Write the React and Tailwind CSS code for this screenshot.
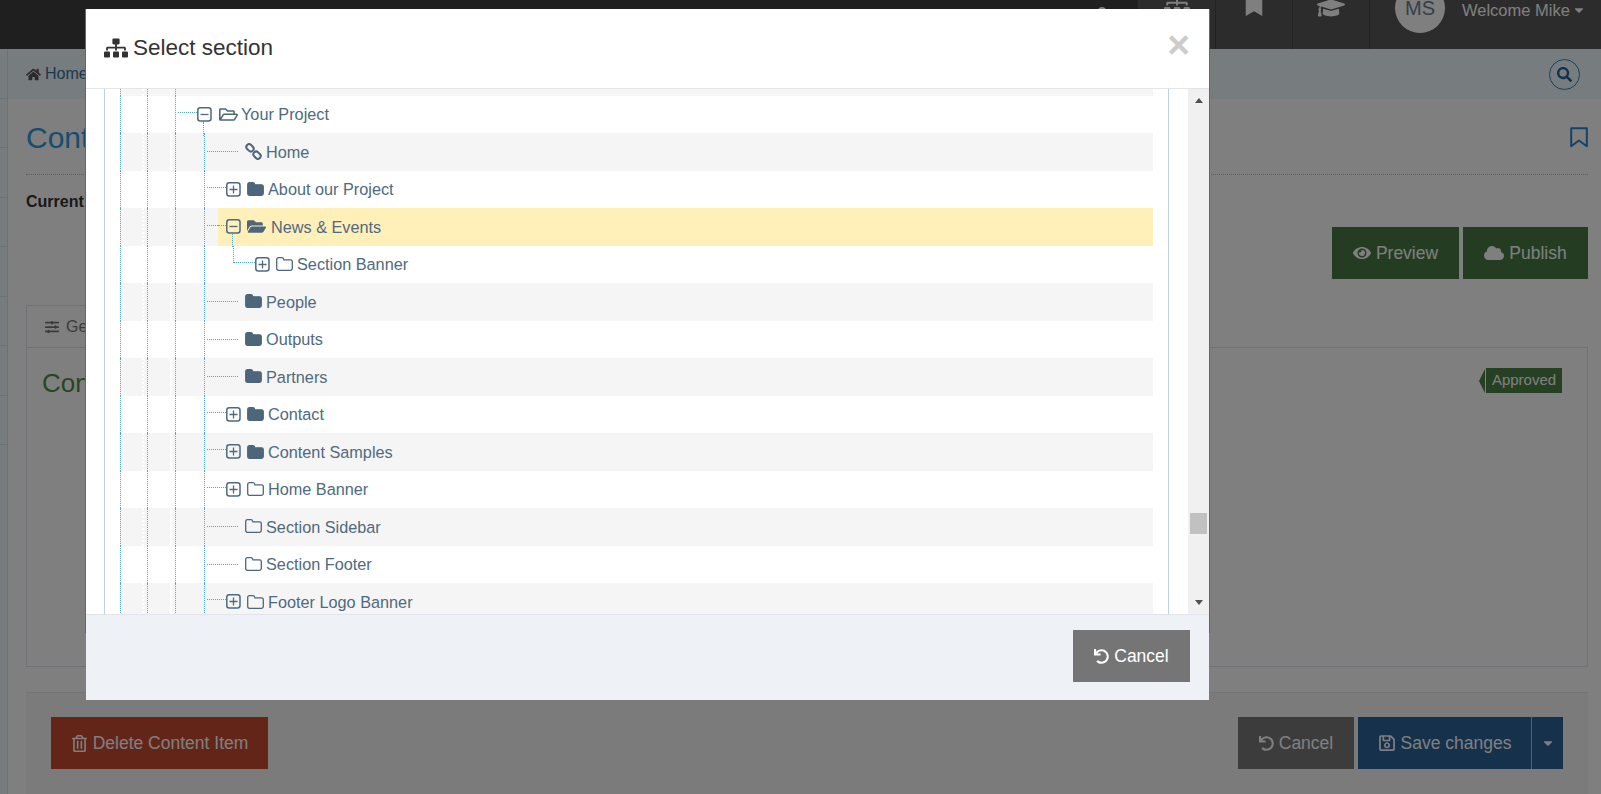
import React from "react";
import {
  FaSitemap, FaHome, FaFolderOpen, FaRegFolderOpen,
  FaEye, FaCloud, FaUndo, FaRegTrashAlt, FaRegSave, FaSlidersH, FaSearch, FaBookmark,
  FaGraduationCap, FaCaretDown, FaUser,
} from "react-icons/fa";

const Box = ({ minus, tail }) => (
  <span className="relative block h-[15px] w-[15px] shrink-0">
    <svg width="15" height="15" viewBox="0 0 15 15" className="block">
      <rect x="0.8" y="0.8" width="13.2" height="13.2" rx="2.5" fill="none" stroke="#4f6a80" strokeWidth="1.5" />
      <path d={minus ? "M3.5 7.5H11.5" : "M3.5 7.5H11.5M7.5 3.5V11.5"} stroke="#4f6a80" strokeWidth="1.3" fill="none" />
    </svg>
    {tail ? <span className={`absolute left-[6px] top-full block border-l border-dotted border-[#4da6df] ${tail}`} /> : null}
  </span>
);

const folderPath =
  "M2.5 .7H6Q7.3 .7 7.6 2L7.9 2.8H14.5Q16.3 2.8 16.3 4.5V11.5Q16.3 13.3 14.5 13.3H2.5Q.7 13.3 .7 11.5V2.5Q.7 .7 2.5 .7Z";

const Icon = ({ kind }) => {
  const c = "block shrink-0 text-[#4d667b]";
  if (kind === "link")
    return (
      <svg width="17" height="17" viewBox="0 0 17 17" className={c} fill="none" stroke="currentColor" strokeWidth="2">
        <rect x="1" y="2" width="8" height="5.6" rx="2.8" transform="rotate(45 5 4.8)" />
        <rect x="8" y="9.4" width="8" height="5.6" rx="2.8" transform="rotate(45 12 12.2)" />
      </svg>
    );
  if (kind === "solid")
    return (
      <svg width="17" height="14" viewBox="0 0 17 14" className={c}>
        <path d={folderPath} fill="currentColor" stroke="currentColor" strokeWidth="1.2" />
      </svg>
    );
  if (kind === "outline")
    return (
      <svg width="17" height="14" viewBox="0 0 17 14" className={c}>
        <path d={folderPath} fill="none" stroke="currentColor" strokeWidth="1.3" />
      </svg>
    );
  if (kind === "open") return <FaRegFolderOpen size={19} className={c} />;
  return <FaFolderOpen size={19} className={c} />;
};

const Guides = ({ stripe, last }) => {
  const bg = stripe ? "bg-[#f5f5f5]" : "bg-white";
  return (
    <>
      <div className={`w-[24px] shrink-0 border-l border-r-2 border-dotted border-l-[#4da6df] border-r-white border-r-solid ${bg}`} />
      <div className={`w-[28px] shrink-0 border-r-2 border-white ${bg}`}>
        <div className="ml-[3px] h-full border-l border-dotted border-[#4da6df]" />
      </div>
      {last ? null : (
        <div className={`w-[32px] shrink-0 ${bg}`}>
          <div className="ml-[3px] h-full border-l border-dotted border-[#4da6df]" />
        </div>
      )}
    </>
  );
};

const Label = ({ children, className = "" }) => (
  <span className={`whitespace-nowrap text-[16.25px] text-[#4f6a80] ${className}`}>{children}</span>
);

const Dots = ({ w, mt, ml = "" }) => <span className={`${w} ${mt} ${ml} block shrink-0 self-start border-t border-dotted border-[#4da6df]`} />;

const Child = ({ stripe, label, icon, exp }) => (
  <div className="flex h-[37.5px]">
    <Guides stripe={stripe} />
    <div className={`flex flex-1 items-center border-l border-dotted border-[#4da6df] ${stripe ? "bg-[#f5f5f5]" : "bg-white"}`}>
      {exp ? (
        <>
          <Dots w="w-[19px]" mt="mt-[16px]" ml="ml-[2px]" />
          <Box />
          <span className="ml-[6px]"><Icon kind={icon} /></span>
          <Label className="ml-[4px]">{label}</Label>
        </>
      ) : (
        <>
          <Dots w="w-[31px]" mt="mt-[18px]" ml="ml-[2px]" />
          <span className="ml-[7px] pb-[1px]"><Icon kind={icon} /></span>
          <Label className="ml-[4px]">{label}</Label>
        </>
      )}
    </div>
  </div>
);

const PageBtn = ({ className, children }) => (
  <button className={`flex h-[52px] items-center justify-center gap-[5px] text-[17.5px] text-white ${className}`}>{children}</button>
);

export default function App() {
  return (
    <div className="relative h-[794px] w-[1601px] overflow-hidden bg-white font-['Liberation_Sans',Arial,sans-serif]">
      {/* top bar */}
      <header className="flex h-[49px] items-start justify-end overflow-hidden bg-[#3f3f3f]">
        <div className="flex h-full w-[70px] justify-center"><FaUser size={18} className="mt-[7px] text-white" /></div>
        <div className="flex h-full items-start bg-[#585858]">
          <div className="flex h-full w-[78px] justify-center border-l border-[#444]"><FaSitemap size={26} className="-mt-[10px] text-white" /></div>
          <div className="flex h-full w-[77px] justify-center border-l border-[#444]"><FaBookmark size={22} className="-mt-[6px] text-white" /></div>
          <div className="flex h-full w-[77px] justify-center border-l border-[#444]"><FaGraduationCap size={28} className="-mt-[6px] text-white" /></div>
          <div className="flex h-full w-[232px] items-start border-l border-[#444] pl-[25px]">
            <div className="-mt-[17px] flex h-[50px] w-[50px] items-center justify-center rounded-full bg-white text-[20px] text-[#6a7f90]">MS</div>
            <span className="ml-[17px] mt-[1px] text-[16.5px] leading-[18px] text-white">Welcome Mike</span>
            <FaCaretDown size={14} className="ml-[2px] mt-[3px] text-white" />
          </div>
        </div>
      </header>

      <div className="flex h-[745px]">
        {/* slim sidebar */}
        <aside className="w-[8px] shrink-0 border-r border-[#d9e4ec] bg-[#eef8fe]">
          {[0, 1, 2, 3, 4, 5, 6, 7].map((i) => (
            <div key={i} className="h-[49.5px] border-b border-[#d4e2ee]" />
          ))}
        </aside>

        <main className="flex min-w-0 flex-1 flex-col">
          <nav className="flex h-[50px] shrink-0 items-center justify-between bg-[#eef8fe] pl-[18px] pr-[21px]">
            <div className="flex items-center gap-[4px] text-[16px] text-[#36709f]">
              <FaHome size={15} className="text-[#555]" />
              <span>Home</span>
            </div>
            <div className="flex h-[31px] w-[31px] items-center justify-center rounded-full border border-[#2a85c8]">
              <FaSearch size={15} className="text-[#20649e]" />
            </div>
          </nav>

          <div className="flex min-h-0 flex-1 flex-col pl-[18px] pr-[13px]">
            <div className="flex h-[76px] shrink-0 items-center justify-between border-b border-dotted border-[#bbb] pt-[1px]">
              <h1 className="text-[30px] text-[#2d9ae0]">Content</h1>
              <svg width="18" height="21" viewBox="0 0 18 21" fill="none" stroke="#2a85c8" strokeWidth="2">
                <path d="M1.2 1.2H16.8V19.3L9 13.5L1.2 19.3Z" strokeLinejoin="round" />
              </svg>
            </div>
            <p className="h-[52px] shrink-0 pt-[17px] text-[16px] font-bold leading-[20px] text-[#333]">Current</p>
            <div className="flex shrink-0 justify-end gap-[4px]">
              <PageBtn className="w-[127px] bg-[#487a44]"><FaEye size={18} /> Preview</PageBtn>
              <PageBtn className="w-[125px] bg-[#487a44]"><FaCloud size={20} /> Publish</PageBtn>
            </div>
            <div className="mt-[26px] flex h-[42px] w-[110px] shrink-0 items-center gap-[7px] border border-b-0 border-[#dce4ee] pl-[18px] text-[16px] text-[#777]">
              <FaSlidersH size={14} />
              <span>General</span>
            </div>
            <section className="flex h-[320px] shrink-0 items-start justify-between border border-[#dce4ee] pl-[15px] pr-[25px] pt-[20px]">
              <h2 className="text-[26px] leading-[30px] text-[#4e8f49]">Content</h2>
              <div className="flex items-center">
                <span className="mr-px h-0 w-0 border-y-[12px] border-r-[6px] border-y-transparent border-r-[#4a8046]" />
                <span className="flex h-[25px] w-[76px] items-center justify-center bg-[#4a8046] text-[15px] text-white">Approved</span>
              </div>
            </section>
            <footer className="mt-[25px] flex flex-1 items-start justify-between border-t border-[#e8e8e8] bg-[#f6f6f6] px-[25px] pt-[24px]">
              <PageBtn className="w-[217px] bg-[#c64a30]"><FaRegTrashAlt size={17} /> Delete Content Item</PageBtn>
              <div className="flex gap-[4px]">
                <PageBtn className="w-[116px] bg-[#787878]"><FaUndo size={15} /> Cancel</PageBtn>
                <div className="flex">
                  <PageBtn className="w-[173px] bg-[#2c6298]"><FaRegSave size={18} /> Save changes</PageBtn>
                  <PageBtn className="w-[32px] border-l border-white/60 bg-[#2c6298]"><FaCaretDown size={14} /></PageBtn>
                </div>
              </div>
            </footer>
          </div>
        </main>
      </div>

      {/* backdrop */}
      <div className="absolute inset-0 bg-black/50" />
      <div className="absolute left-[85px] top-[9px] h-[624px] w-[1125px] border border-[#666]" />

      {/* modal */}
      <div className="absolute left-[86px] top-[9px] flex h-[691px] w-[1123px] flex-col bg-white">
        <div className="flex h-[80px] shrink-0 items-center justify-between border-b border-[#e5e5e5] pl-[18px] pr-[19px]">
          <div className="flex items-center gap-[5px] pb-[1px] text-[22.5px] leading-none text-[#333]">
            <FaSitemap size={24} />
            <span>Select section</span>
          </div>
          <span className="pb-[9px] text-[39px] font-bold leading-none text-[#cccccc]">×</span>
        </div>

        <div className="flex h-[525px] shrink-0">
          <div className="ml-[18px] w-[1065px] shrink-0 overflow-hidden border-x border-[#c3d0e0] pl-[15px] pr-[15px]">
            <div className="flex h-[6.5px]">
              <Guides stripe />
              <div className="flex-1 bg-[#f5f5f5]" />
            </div>

            <div className="flex h-[37.5px]">
              <Guides last />
              <div className="ml-[3px] flex flex-1 items-center border-l border-dotted border-[#4da6df]">
                <Dots w="w-[19px]" mt="mt-[16px]" ml="ml-[2px]" />
                <Box minus tail="h-[14px]" />
                <span className="ml-[7px]"><Icon kind="open" /></span>
                <Label className="ml-[3px]">Your Project</Label>
              </div>
            </div>

            <Child stripe label="Home" icon="link" />
            <Child label="About our Project" icon="solid" exp />

            <div className="flex h-[37.5px]">
              <Guides stripe />
              <div className="flex flex-1 border-l border-dotted border-[#4da6df] bg-[#f5f5f5]">
                <div className="w-[13px] shrink-0">
                  <Dots w="w-[11px]" mt="mt-[17px]" ml="ml-[2px]" />
                </div>
                <div className="flex flex-1 items-center bg-[#ffefb8]">
                  <Dots w="w-[8px]" mt="mt-[17px]" />
                  <Box minus tail="h-[13px]" />
                  <span className="ml-[6px]"><Icon kind="openSolid" /></span>
                  <Label className="ml-[5px]">News &amp; Events</Label>
                </div>
              </div>
            </div>

            <div className="flex h-[37.5px]">
              <Guides />
              <div className="flex flex-1 items-center border-l border-dotted border-[#4da6df]">
                <span className="ml-[28px] block h-[17px] w-[22px] shrink-0 self-start border-b border-l border-dotted border-[#4da6df]" />
                <Box />
                <span className="ml-[6px]"><Icon kind="outline" /></span>
                <Label className="ml-[4px]">Section Banner</Label>
              </div>
            </div>

            <Child stripe label="People" icon="solid" />
            <Child label="Outputs" icon="solid" />
            <Child stripe label="Partners" icon="solid" />
            <Child label="Contact" icon="solid" exp />
            <Child stripe label="Content Samples" icon="solid" exp />
            <Child label="Home Banner" icon="outline" exp />
            <Child stripe label="Section Sidebar" icon="outline" />
            <Child label="Section Footer" icon="outline" />
            <Child stripe label="Footer Logo Banner" icon="outline" exp />
          </div>

          <div className="ml-[19px] flex w-[21px] shrink-0 flex-col bg-[#f0f0f0]">
            <div className="flex h-[23px] shrink-0 items-center justify-center">
              <span className="h-0 w-0 border-x-[4.5px] border-b-[5px] border-x-transparent border-b-[#505050]" />
            </div>
            <div className="mx-[2px] mt-[401px] h-[21px] bg-[#c1c1c1]" />
            <div className="flex-1" />
            <div className="flex h-[24px] shrink-0 items-center justify-center">
              <span className="h-0 w-0 border-x-[4.5px] border-t-[5px] border-x-transparent border-t-[#505050]" />
            </div>
          </div>
        </div>

        <div className="flex flex-1 items-start justify-end border-t border-[#e0e5ec] bg-[#eef1f6] pr-[19px] pt-[15px]">
          <PageBtn className="w-[117px] bg-[#757575]"><FaUndo size={15} /> Cancel</PageBtn>
        </div>
      </div>
    </div>
  );
}
